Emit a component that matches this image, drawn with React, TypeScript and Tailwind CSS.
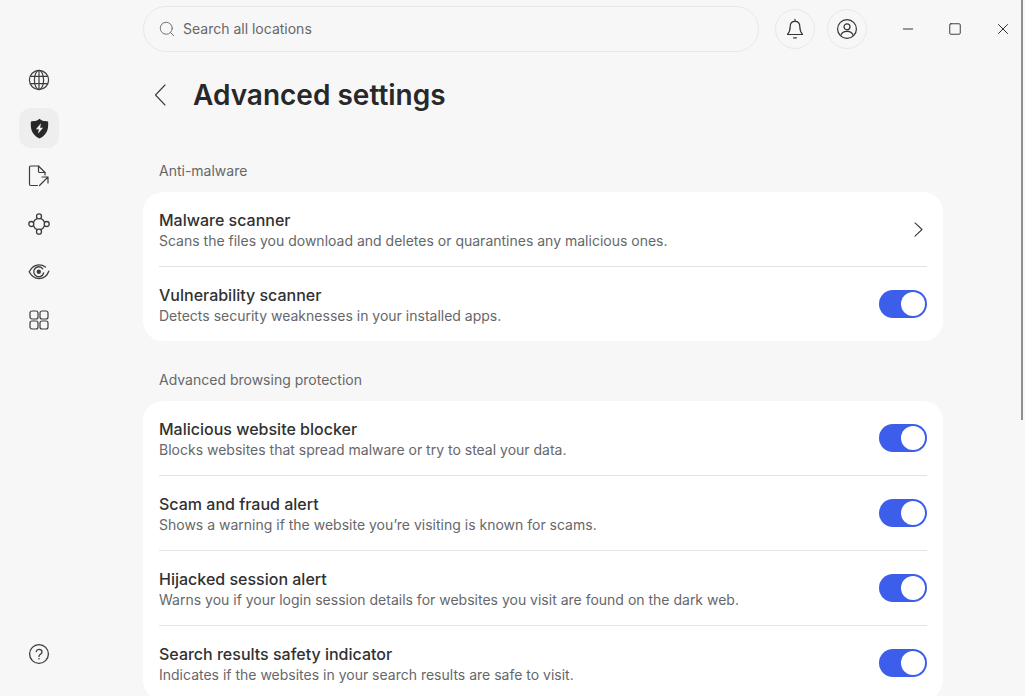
import { Search, Minus, Square, X } from "lucide-react";

type Row = { title: string; desc: string; chevron?: boolean };

const antiMalware: Row[] = [
    { title: "Malware scanner", desc: "Scans the files you download and deletes or quarantines any malicious ones.", chevron: true },
    { title: "Vulnerability scanner", desc: "Detects security weaknesses in your installed apps." },
];

const browsing: Row[] = [
    { title: "Malicious website blocker", desc: "Blocks websites that spread malware or try to steal your data." },
    { title: "Scam and fraud alert", desc: "Shows a warning if the website you’re visiting is known for scams." },
    { title: "Hijacked session alert", desc: "Warns you if your login session details for websites you visit are found on the dark web." },
    { title: "Search results safety indicator", desc: "Indicates if the websites in your search results are safe to visit." },
];

function GlobeIcon() {
    return (
        <svg width="22" height="22" viewBox="0 0 22 22" fill="none" stroke="#3c3d3f" strokeWidth="1.2">
            <circle cx="11" cy="11" r="9.6" />
            <ellipse cx="11" cy="11" rx="4.6" ry="9.6" />
            <path d="M11 1.4v19.2M2.6 7.4h16.8M2.6 14.6h16.8" />
        </svg>
    );
}

function ShieldBolt() {
    return (
        <svg width="21" height="21" viewBox="0 0 20 20">
            <path d="M10 .6c1.6 1.5 3.2 2.2 5.2 2.3l3 .4c.4 6.3-.2 12.4-8.2 16.2C2 15.7 1.4 9.6 1.800 3.300l3-.4C6.800 2.800 8.400 2.100 10 .6z" fill="#27282a" />
            <path d="M11.400 5 6.600 10.800h2.800L8.600 15l4.800-5.800h-2.800z" fill="#f3f3f3" />
        </svg>
    );
}

function FileShare() {
    return (
        <svg width="22" height="22" viewBox="0 0 22 22" fill="none" stroke="#3c3d3f" strokeWidth="1.2" strokeLinecap="round" strokeLinejoin="round">
            <path d="M9.5 20.5H2.7a1.2 1.2 0 0 1-1.2-1.2V2.200A1.2 1.2 0 0 1 2.7 1h7.800l6.500 6.500V10" />
            <path d="M10.500 1v5.300a1.200 1.200 0 0 0 1.200 1.200H17" />
            <path d="m11.500 20.500 8.500-8.500M14 12h6v6" />
        </svg>
    );
}

function Nodes() {
    return (
        <svg width="22" height="22" viewBox="0 0 22 22" fill="none" stroke="#3c3d3f" strokeWidth="1.3">
            <circle cx="11" cy="3.300" r="2.500" />
            <circle cx="11" cy="18.700" r="2.500" />
            <circle cx="3.300" cy="11" r="2.500" />
            <circle cx="18.700" cy="11" r="2.500" />
            <path d="M5.300 9.500A7 7 0 0 1 9.500 5.300M12.500 5.300A7 7 0 0 1 16.700 9.500M16.700 12.500A7 7 0 0 1 12.500 16.700M9.500 16.700A7 7 0 0 1 5.300 12.500" />
        </svg>
    );
}

function EyeTarget() {
    return (
        <svg width="22" height="22" viewBox="0 0 22 22" fill="none" stroke="#3c3d3f" strokeWidth="1.3" strokeLinecap="round">
            <path d="M17.500 6C15.500 4.500 13.400 3.800 11 3.800 6.800 3.800 3.400 6.400 1.200 10.800c2.200 4.400 5.600 6.800 9.800 6.800 4.600 0 8-2.600 9.800-7.400" />
            <path d="M14.800 7.800A5 5 0 1 0 15.600 12" />
            <circle cx="10.800" cy="10.800" r="2.200" fill="#3c3d3f" stroke="none" />
        </svg>
    );
}

function Grid() {
    return (
        <svg width="20" height="20" viewBox="0 0 20 20" fill="none" stroke="#3c3d3f" strokeWidth="1.2">
            <rect x="1" y="1" width="8" height="8" rx="2" />
            <rect x="11" y="1" width="8" height="8" rx="2" />
            <rect x="1" y="11" width="8" height="8" rx="2" />
            <rect x="11" y="11" width="8" height="8" rx="2" />
        </svg>
    );
}

function HelpIcon() {
    return (
        <svg width="22" height="22" viewBox="0 0 22 22" fill="none" stroke="#3c3d3f" strokeWidth="1.3" strokeLinecap="round">
            <circle cx="11" cy="11" r="9.400" />
            <path d="M8.200 8.600A2.900 2.900 0 0 1 11 6.400c1.700 0 3 1.100 3 2.600 0 2.200-3 2.400-3 4.400" />
            <circle cx="11" cy="15.800" r=".8" fill="#3c3d3f" stroke="none" />
        </svg>
    );
}

function BellIcon() {
    return (
        <svg width="20" height="22" viewBox="0 0 20 22" fill="none" stroke="#333436" strokeWidth="1.2" strokeLinecap="round" strokeLinejoin="round">
            <path d="M10 3.400c-3 0-4.800 2.200-4.800 5.200 0 4.200-1 6-2.700 7.900h15c-1.700-1.900-2.700-3.700-2.700-7.900 0-3-1.800-5.200-4.800-5.200z" />
            <path d="M10 1.400v2M8.600 19.800h2.800" />
        </svg>
    );
}

function Profile() {
    return (
        <svg width="20" height="20" viewBox="0 0 20 20" fill="none" stroke="#333436" strokeWidth="1.2">
            <circle cx="10" cy="10" r="9.400" />
            <circle cx="10" cy="7.800" r="3" />
            <path d="M3.800 16.600c.6-2.800 3-4.300 6.200-4.300s5.600 1.500 6.200 4.300" />
        </svg>
    );
}

function BackChevron() {
    return (
        <svg width="12" height="22" viewBox="0 0 12 22" fill="none" stroke="#3c3d3f" strokeWidth="1.1" strokeLinecap="round" strokeLinejoin="round">
            <path d="M11 1 1.500 11 11 21" />
        </svg>
    );
}

function RowChevron() {
    return (
        <svg width="9" height="15" viewBox="0 0 9 15" fill="none" stroke="#3c3d3f" strokeWidth="1.1" strokeLinecap="round" strokeLinejoin="round">
            <path d="m1 .8 7 6.700-7 6.700" />
        </svg>
    );
}

function Toggle() {
    return (
        <div className="w-12 h-7 rounded-full bg-[#3d5eea] flex items-center justify-end pr-0.5 shrink-0">
            <div className="w-6 h-6 rounded-full bg-white" />
        </div>
    );
}

function SettingsCard({ rows }: { rows: Row[] }) {
    return (
        <div className="bg-white rounded-[20px] px-4">
            {rows.map((row, i) => (
                <div key={row.title} className={`flex items-center justify-between ${i > 0 ? "h-[75px] border-t border-[#e3e3e3]" : "h-[74px]"}`}>
                    <div className="flex flex-col pt-[3px]">
                        <span className="text-base leading-[21px] font-medium text-[#303133]">{row.title}</span>
                        <span className="text-sm leading-[20px] text-[#66676a]">{row.desc}</span>
                    </div>
                    {row.chevron ? <div className="mr-[4px] flex"><RowChevron /></div> : <Toggle />}
                </div>
            ))}
        </div>
    );
}

export default function App() {
    return (
        <div className="h-[696px] w-full overflow-hidden bg-[#f7f7f7] flex font-['Inter',sans-serif] relative">
            {/* Sidebar */}
            <aside className="w-[78px] shrink-0 flex flex-col items-center pt-[60px] pb-[22px]">
                <div className="flex flex-col gap-2">
                    <div className="w-10 h-10 flex items-center justify-center"><GlobeIcon /></div>
                    <div className="w-10 h-10 flex items-center justify-center rounded-xl bg-[#eeeeee]"><ShieldBolt /></div>
                    <div className="w-10 h-10 flex items-center justify-center"><FileShare /></div>
                    <div className="w-10 h-10 flex items-center justify-center"><Nodes /></div>
                    <div className="w-10 h-10 flex items-center justify-center"><EyeTarget /></div>
                    <div className="w-10 h-10 flex items-center justify-center"><Grid /></div>
                </div>
                <div className="mt-auto w-10 h-10 flex items-center justify-center"><HelpIcon /></div>
            </aside>

            {/* Main */}
            <main className="flex-1 min-w-0 pl-[65px]">
                {/* Top bar */}
                <div className="flex items-center h-[46px] mt-[6px]">
                    <div className="w-[616px] h-[46px] rounded-full border border-[#e8e8e8] flex items-center pl-[14px] gap-[7px]">
                        <Search size={18} strokeWidth={1.2} className="text-[#66676a]" />
                        <span className="text-sm text-[#66676a]">Search all locations</span>
                    </div>
                    <div className="ml-4 w-10 h-10 rounded-full border border-[#e8e8e8] flex items-center justify-center"><BellIcon /></div>
                    <div className="ml-3 w-10 h-10 rounded-full border border-[#e8e8e8] flex items-center justify-center"><Profile /></div>
                    <div className="flex items-center ml-[33px]">
                        <Minus size={16} strokeWidth={1.4} className="text-[#27282a]" />
                        <Square size={14} strokeWidth={1.5} className="text-[#27282a] ml-[32px]" />
                        <X size={18} strokeWidth={1.3} className="text-[#27282a] ml-[32px]" />
                    </div>
                </div>

                {/* Title */}
                <div className="flex items-center mt-[23px] h-[40px]">
                    <div className="ml-[11px] flex"><BackChevron /></div>
                    <h1 className="ml-[27px] text-[28px] leading-10 font-semibold text-[#27282a]">Advanced settings</h1>
                </div>

                <div className="w-[800px]">
                    <h2 className="mt-[46px] mb-[11px] pl-4 text-sm leading-5 font-normal text-[#66676a]">Anti-malware</h2>
                    <SettingsCard rows={antiMalware} />
                    <h2 className="mt-[29px] mb-[11px] pl-4 text-sm leading-5 font-normal text-[#66676a]">Advanced browsing protection</h2>
                    <SettingsCard rows={browsing} />
                </div>
            </main>

            {/* Scrollbar */}
            <div className="absolute right-[2px] top-0 w-[2px] h-[420px] bg-[#8f8f8f]" />
        </div>
    );
}
